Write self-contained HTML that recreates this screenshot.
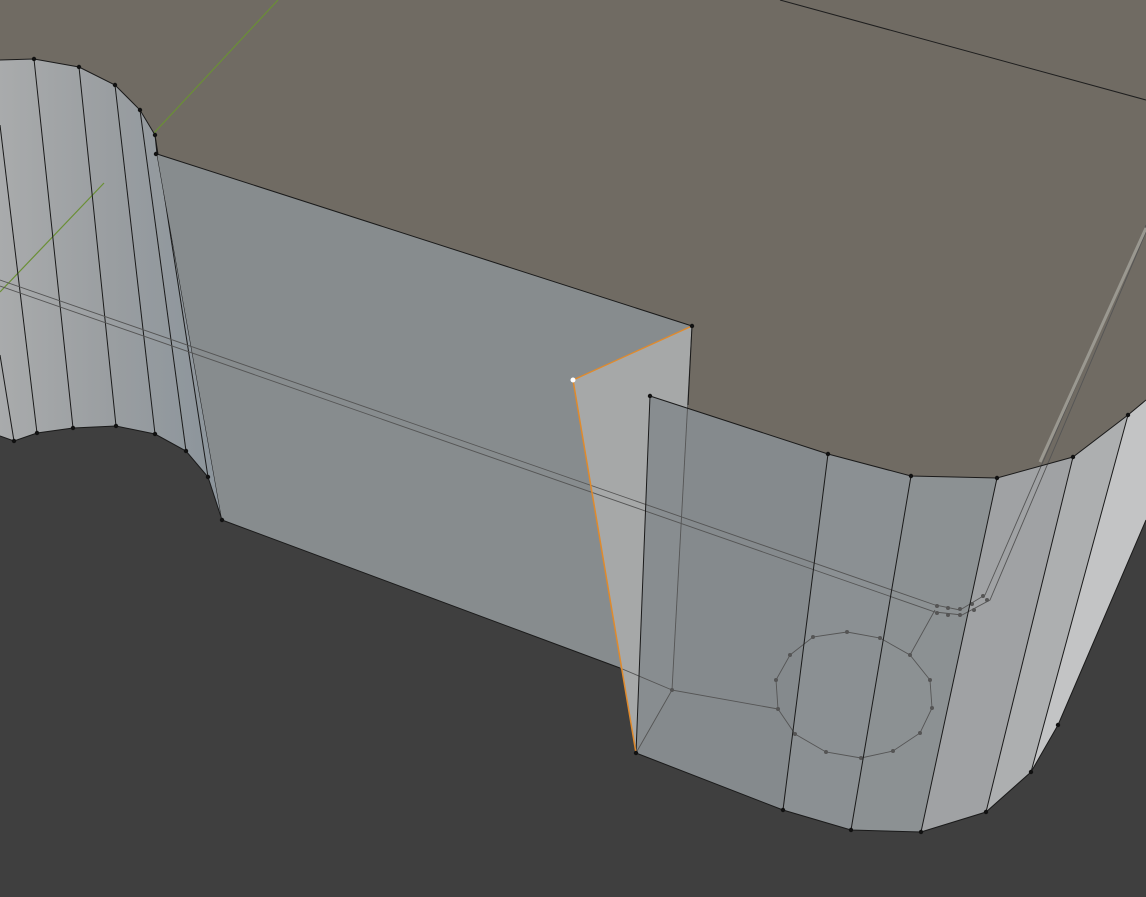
<!DOCTYPE html>
<html><head><meta charset="utf-8"><style>
html,body{margin:0;padding:0;background:#3f3f3f;overflow:hidden}
svg{display:block}
</style></head><body>
<svg width="1146" height="897" viewBox="0 0 1146 897" xmlns="http://www.w3.org/2000/svg">
<defs>
<linearGradient id="lw" x1="0" x2="1" y1="0" y2="0">
<stop offset="0" stop-color="#a9abac"/><stop offset="0.5" stop-color="#9a9ea1"/><stop offset="1" stop-color="#8b949b"/>
</linearGradient>
</defs>
<rect width="1146" height="897" fill="#3f3f3f"/>
<polygon points="0,0 1146,0 1146,400 1128,415 1073,457 997,478 911,476 828,454 650,396 692,326 157,154 155,135 140,110 115,85 79,67 34,59 0,60" fill="#706b63"/>
<line x1="780" y1="0" x2="1146" y2="100" stroke="#1e1e1e" stroke-width="1"/>
<line x1="154" y1="133" x2="278" y2="0" stroke="#6a8f35" stroke-width="1.2"/>
<!-- left wall -->
<polygon points="0,60 34,59 79,67 115,85 140,110 155,135 157,154 222,520 208,477 186,451 155,434 116,426 73,428 37,433 14,441 0,436" fill="url(#lw)"/>
<line x1="0" y1="292" x2="104" y2="183" stroke="#6a8f35" stroke-width="1.2"/>
<g stroke="#1a1a1a" stroke-width="1">
<line x1="0" y1="125" x2="37" y2="433"/>
<line x1="0" y1="355" x2="14" y2="441"/>
<line x1="34" y1="59" x2="73" y2="428"/>
<line x1="79" y1="67" x2="116" y2="426"/>
<line x1="115" y1="85" x2="155" y2="434"/>
<line x1="140" y1="110" x2="186" y2="451"/>
<line x1="155" y1="135" x2="208" y2="477"/>
<line x1="157" y1="154" x2="222" y2="520"/>
</g>
<line x1="160" y1="156" x2="222" y2="500" stroke="#555" stroke-width="0.8"/>
<!-- big front face -->
<polygon points="157,154 692,326 672,690 620,668 222,520" fill="#878c8e"/>
<!-- light triangle -->
<polygon points="573,380 692,326 672,690 636,753" fill="#a6a8a8"/>
<!-- right front faces -->
<polygon points="650,396 828,454 783,810 636,753" fill="#878c8f" fill-opacity="0.97"/>
<polygon points="828,454 911,476 851,830 783,810" fill="#8b9093"/>
<polygon points="911,476 997,478 921,832 851,830" fill="#8c9193"/>
<polygon points="997,478 1073,457 986,812 921,832" fill="#a0a2a4"/>
<polygon points="1073,457 1128,415 1031,772 986,812" fill="#adafb0"/>
<polygon points="1128,415 1146,400 1146,520 1058,725 1031,772" fill="#c3c4c5"/>
<g fill="none" stroke="#555" stroke-width="0.9">
<polyline points="0,280 935,605 960,610 985,595 1146,225"/>
<polyline points="0,286 935,612 962,615 990,600 1146,232"/>
<line x1="692" y1="326" x2="672" y2="690"/>
<polyline points="636,753 672,690 778,709"/>
<line x1="620" y1="668" x2="672" y2="690"/>
<polyline points="910,655 935,610"/>
<polygon points="790,655 813,637 847,632 880,638 910,655 930,680 932,708 920,733 893,751 861,758 826,752 795,734 778,709 776,680"/>
</g>
<g fill="#555">
<circle cx="790" cy="655" r="2"/><circle cx="813" cy="637" r="2"/><circle cx="847" cy="632" r="2"/><circle cx="880" cy="638" r="2"/><circle cx="910" cy="655" r="2"/><circle cx="930" cy="680" r="2"/><circle cx="932" cy="708" r="2"/><circle cx="920" cy="733" r="2"/><circle cx="893" cy="751" r="2"/><circle cx="861" cy="758" r="2"/><circle cx="826" cy="752" r="2"/><circle cx="795" cy="734" r="2"/><circle cx="778" cy="709" r="2"/><circle cx="776" cy="680" r="2"/><circle cx="672" cy="690" r="2"/>
<circle cx="937" cy="606" r="2"/><circle cx="948" cy="608" r="2"/><circle cx="960" cy="609" r="2"/><circle cx="972" cy="604" r="2"/><circle cx="983" cy="596" r="2"/>
<circle cx="937" cy="613" r="2"/><circle cx="948" cy="615" r="2"/><circle cx="960" cy="615" r="2"/><circle cx="974" cy="610" r="2"/><circle cx="987" cy="600" r="2"/>
</g>
<g stroke="#1a1a1a" stroke-width="1" fill="none">
<line x1="157" y1="154" x2="692" y2="326"/>
<line x1="692" y1="326" x2="688" y2="405"/>
<line x1="222" y1="520" x2="620" y2="668"/>
<polyline points="650,396 828,454 911,476 997,478 1073,457 1128,415 1146,400"/>
<polyline points="636,753 783,810 851,830 921,832 986,812 1031,772 1058,725 1146,520"/>
<line x1="650" y1="396" x2="636" y2="753"/>
<line x1="828" y1="454" x2="783" y2="810"/>
<line x1="911" y1="476" x2="851" y2="830"/>
<line x1="997" y1="478" x2="921" y2="832"/>
<line x1="1073" y1="457" x2="986" y2="812"/>
<line x1="1128" y1="415" x2="1031" y2="772"/>
<polyline points="0,60 34,59 79,67 115,85 140,110 155,135 157,154"/>
<polyline points="0,436 14,441 37,433 73,428 116,426 155,434 186,451 208,477 222,520"/>
</g>
<polyline points="1040,462 1146,228" stroke="#9a9890" stroke-width="3" fill="none"/>
<polyline points="573,380 692,326" stroke="#e08a2c" stroke-width="1.3" fill="none"/>
<polyline points="573,380 636,753" stroke="#e08a2c" stroke-width="1.5" fill="none"/>
<g fill="#111">
<circle cx="34" cy="59" r="2.2"/><circle cx="79" cy="67" r="2.2"/><circle cx="115" cy="85" r="2.2"/><circle cx="140" cy="110" r="2.2"/><circle cx="155" cy="135" r="2.2"/><circle cx="156" cy="154" r="2.2"/>
<circle cx="14" cy="441" r="2.2"/><circle cx="37" cy="433" r="2.2"/><circle cx="73" cy="428" r="2.2"/><circle cx="116" cy="426" r="2.2"/><circle cx="155" cy="434" r="2.2"/><circle cx="186" cy="451" r="2.2"/><circle cx="208" cy="477" r="2.2"/><circle cx="222" cy="520" r="2.2"/>
<circle cx="692" cy="326" r="2.2"/><circle cx="650" cy="396" r="2.2"/><circle cx="828" cy="454" r="2.2"/><circle cx="911" cy="476" r="2.2"/><circle cx="997" cy="478" r="2.2"/><circle cx="1073" cy="457" r="2.2"/><circle cx="1128" cy="415" r="2.2"/>
<circle cx="636" cy="753" r="2.2"/><circle cx="783" cy="810" r="2.2"/><circle cx="851" cy="830" r="2.2"/><circle cx="921" cy="832" r="2.2"/><circle cx="986" cy="812" r="2.2"/><circle cx="1031" cy="772" r="2.2"/><circle cx="1058" cy="725" r="2.2"/>
</g>
<circle cx="573" cy="380" r="2.5" fill="#fff"/>
</svg>
</body></html>
